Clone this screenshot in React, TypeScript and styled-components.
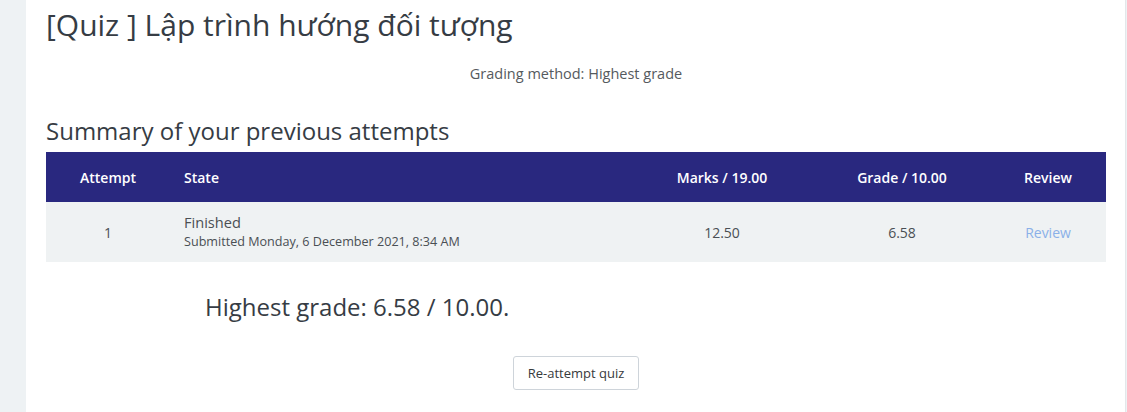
import React from "react";
import styled, { createGlobalStyle } from "styled-components";

const GlobalStyle = createGlobalStyle`
    html, body {
        margin: 0;
        padding: 0;
        background: #eef2f4;
    }
    body {
        font-family: "Open Sans", "Noto Sans", sans-serif;
        color: #373a3c;
    }
`;

interface Attempt {
    number: number;
    state: string;
    submitted: string;
    marks: string;
    grade: string;
}

const attempts: Attempt[] = [
    {
        number: 1,
        state: "Finished",
        submitted: "Submitted Monday, 6 December 2021, 8:34 AM",
        marks: "12.50",
        grade: "6.58",
    },
];

const App = () => {
    return (
        <>
            <GlobalStyle />
            <Page>
                <Main>
                    <Title>[Quiz ] Lập trình hướng đối tượng</Title>
                    <GradingMethod>Grading method: Highest grade</GradingMethod>
                    <SectionTitle>Summary of your previous attempts</SectionTitle>
                    <Table>
                        <HeadRow>
                            <Cell align="center">Attempt</Cell>
                            <Cell align="left">State</Cell>
                            <Cell align="center">Marks / 19.00</Cell>
                            <Cell align="center">Grade / 10.00</Cell>
                            <Cell align="center">Review</Cell>
                        </HeadRow>
                        {attempts.map((a) => (
                            <BodyRow key={a.number}>
                                <Cell align="center">{a.number}</Cell>
                                <Cell align="left">
                                    <StateText>{a.state}</StateText>
                                    <Submitted>{a.submitted}</Submitted>
                                </Cell>
                                <Cell align="center">{a.marks}</Cell>
                                <Cell align="center">{a.grade}</Cell>
                                <Cell align="center">
                                    <ReviewLink href="#">Review</ReviewLink>
                                </Cell>
                            </BodyRow>
                        ))}
                    </Table>
                    <Feedback>Highest grade: 6.58 / 10.00.</Feedback>
                    <ButtonRow>
                        <Button type="button">Re-attempt quiz</Button>
                    </ButtonRow>
                </Main>
            </Page>
        </>
    );
};

export default App;

const Page = styled.div`
    display: flex;
    height: 412px;
    padding-left: 26px;
    padding-right: 1px;
    box-sizing: border-box;
    overflow: hidden;
`;

const Main = styled.div`
    flex: 1;
    background: #fff;
    border-right: 1px solid #e3e7ea;
    padding: 0 19px 0 20px;
    display: flex;
    flex-direction: column;
`;

const Title = styled.h2`
    margin: 4px 0 0;
    font-size: 30px;
    font-weight: 400;
    line-height: 42px;
    color: #363c44;
`;

const GradingMethod = styled.p`
    margin: 17px 0 0;
    text-align: center;
    font-size: 14.5px;
    line-height: 22px;
    color: #555a5e;
`;

const SectionTitle = styled.h3`
    margin: 30px 0 0;
    font-size: 24px;
    font-weight: 400;
    line-height: 32px;
    color: #363c44;
`;

const Table = styled.div`
    margin-top: 5px;
    display: flex;
    flex-direction: column;
`;

const Row = styled.div`
    display: grid;
    grid-template-columns: 124px 472px 160px 200px 1fr;
    align-items: center;
`;

const HeadRow = styled(Row)`
    height: 50px;
    background: #29287f;
    color: #fff;
    font-size: 14px;
    font-weight: 600;
`;

const BodyRow = styled(Row)`
    height: 60px;
    background: #eff2f3;
    font-size: 14px;
    color: #4a4f54;
`;

interface CellProps {
    align: "left" | "center";
}

const Cell = styled.div<CellProps>`
    text-align: ${(p) => p.align};
    padding-left: ${(p) => (p.align === "left" ? "14px" : "0")};

    &:last-child {
        padding-right: 12px;
    }
`;

const StateText = styled.div`
    font-size: 14.6px;
    line-height: 20px;
`;

const Submitted = styled.div`
    font-size: 12.6px;
    line-height: 20px;
`;

const ReviewLink = styled.a`
    color: #8ab0e8;
    text-decoration: none;
`;

const Feedback = styled.h3`
    margin: 29px 0 0 159px;
    font-size: 24px;
    font-weight: 400;
    line-height: 32px;
    color: #363c44;
`;

const ButtonRow = styled.div`
    margin-top: 33px;
    display: flex;
    justify-content: center;
`;

const Button = styled.button`
    font-family: "Open Sans", "Noto Sans", sans-serif;
    font-size: 13px;
    color: #373a3c;
    background: #fff;
    border: 1px solid #ced4da;
    border-radius: 3px;
    padding: 0 14px;
    height: 34px;
`;
